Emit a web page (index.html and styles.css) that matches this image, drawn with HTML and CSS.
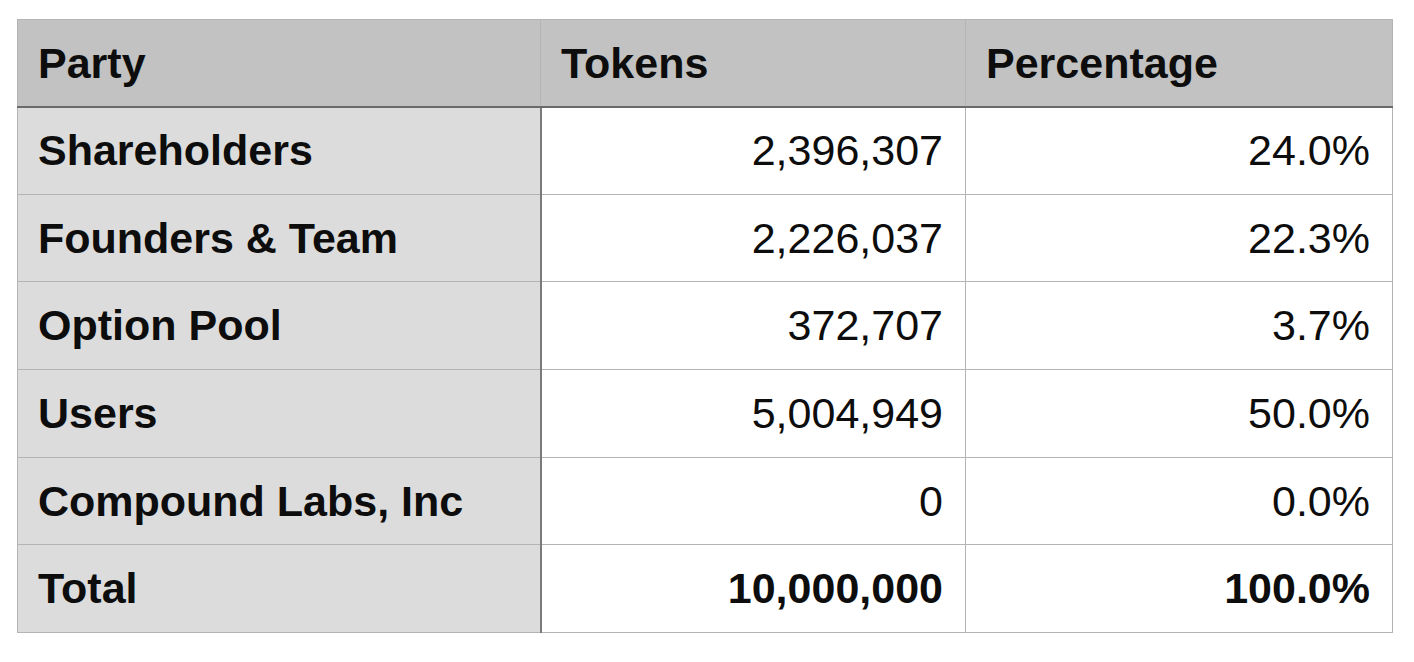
FILE: index.html
```html
<!DOCTYPE html>
<html>
<head>
<meta charset="utf-8">
<link rel="stylesheet" href="styles.css">
</head>
<body>
<table class="alloc">
  <colgroup>
    <col class="c-party">
    <col class="c-tokens">
    <col class="c-pct">
  </colgroup>
  <thead>
    <tr>
      <th>Party</th>
      <th>Tokens</th>
      <th>Percentage</th>
    </tr>
  </thead>
  <tbody>
    <tr><td class="name">Shareholders</td><td class="num">2,396,307</td><td class="num">24.0%</td></tr>
    <tr><td class="name">Founders &amp; Team</td><td class="num">2,226,037</td><td class="num">22.3%</td></tr>
    <tr><td class="name">Option Pool</td><td class="num">372,707</td><td class="num">3.7%</td></tr>
    <tr><td class="name">Users</td><td class="num">5,004,949</td><td class="num">50.0%</td></tr>
    <tr><td class="name">Compound Labs, Inc</td><td class="num">0</td><td class="num">0.0%</td></tr>
    <tr class="total"><td class="name">Total</td><td class="num">10,000,000</td><td class="num">100.0%</td></tr>
  </tbody>
</table>
</body>
</html>
```

FILE: styles.css
```css
html, body {
  margin: 0;
  background: #ffffff;
}
body {
  padding: 19px 0 0 17px;
  font-family: "Liberation Sans", Arial, sans-serif;
  color: #0d0d0d;
}
.alloc {
  border-collapse: collapse;
  table-layout: fixed;
  width: 1375px;
  font-size: 43px;
}
.c-party { width: 523px; }
.c-tokens { width: 425px; }
.c-pct { width: 427px; }

.alloc th,
.alloc td {
  height: 87.7px;
  padding: 0 22px 0 20px;
  border: 1px solid #b4b4b4;
  vertical-align: middle;
  white-space: nowrap;
  box-sizing: border-box;
}
.alloc th {
  height: 87px;
  background: #c1c2c1;
  text-align: left;
  font-weight: bold;
  padding-top: 2px;
  border-bottom: 2px solid #6a6a6a;
}
.alloc td.name {
  background: #dcdcdc;
  font-weight: bold;
  border-right: 2px solid #7a7a7a;
}
.alloc td.num {
  text-align: right;
  background: #ffffff;
}
.alloc tr.total td {
  font-weight: bold;
}
```
